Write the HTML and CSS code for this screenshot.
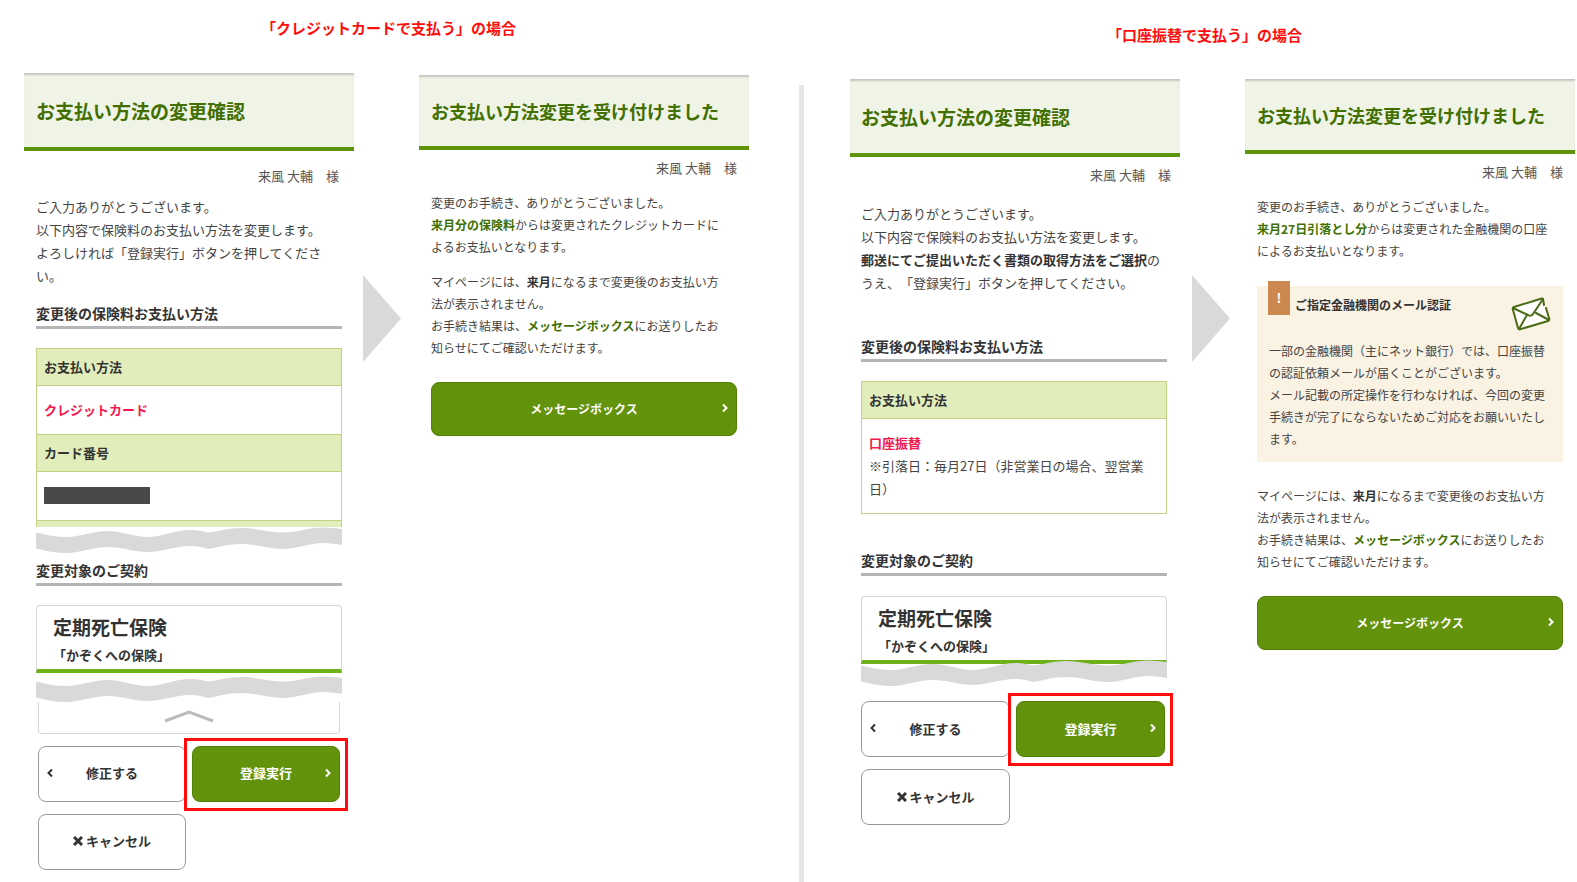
FILE: index.html
```html
<!DOCTYPE html>
<html lang="ja">
<head>
    <meta charset="UTF-8">
    <meta name="viewport" content="width=device-width, initial-scale=1.0">
    <title>お支払い方法の変更</title>
    <link rel="stylesheet" href="styles.css">
</head>
<body>
    <!-- クレジットカード -->
    <section class="case case-card">
        <h1 class="caption">「クレジットカードで支払う」の場合</h1>
        <div class="flow">
            <div class="step step-confirm">
                <h2 class="step-title">お支払い方法の変更確認</h2>
                <p class="customer">来風 大輔　様</p>
                <div class="step-body">
                    <p class="text">ご入力ありがとうございます。<br>以下内容で保険料のお支払い方法を変更します。<br>よろしければ「登録実行」ボタンを押してください。</p>
                    <h3 class="section-title">変更後の保険料お支払い方法</h3>
                    <table class="info">
                        <tr><th scope="row">お支払い方法</th></tr>
                        <tr><td><strong class="value">クレジットカード</strong></td></tr>
                        <tr><th scope="row">カード番号</th></tr>
                        <tr><td><span class="masked"></span></td></tr>
                        <tr><th class="cut"></th></tr>
                    </table>
                    <svg class="wave" viewBox="0 0 306 26" preserveAspectRatio="none" aria-hidden="true">
                        <path d="M0 5.500C10 8 20 10 30 10C45 10 56 4 72 4C86 4 98 10 111 10C127 10 138 3 155 3C162 3 166 4 172 5.500C184 4 192 1 205 1C220 1 232 5.500 247 5.500C262 5.500 272 .5 288 .5C294 .5 300 1 306 2V18C300 17 294 16 288 16C272 16 262 22 247 22C232 22 220 17 205 17C192 17 184 20 172 22C166 20 162 19 155 19C138 19 127 25 111 25C98 25 86 20 72 20C56 20 45 26 30 26C20 26 10 24 0 21.500Z"/>
                    </svg>
                    <h3 class="section-title">変更対象のご契約</h3>
                    <div class="contract">
                        <p class="contract-name">定期死亡保険</p>
                        <p class="contract-sub">「かぞくへの保険」</p>
                    </div>
                    <svg class="wave" viewBox="0 0 306 26" preserveAspectRatio="none" aria-hidden="true">
                        <path d="M0 5.500C10 8 20 10 30 10C45 10 56 4 72 4C86 4 98 10 111 10C127 10 138 3 155 3C162 3 166 4 172 5.500C184 4 192 1 205 1C220 1 232 5.500 247 5.500C262 5.500 272 .5 288 .5C294 .5 300 1 306 2V18C300 17 294 16 288 16C272 16 262 22 247 22C232 22 220 17 205 17C192 17 184 20 172 22C166 20 162 19 155 19C138 19 127 25 111 25C98 25 86 20 72 20C56 20 45 26 30 26C20 26 10 24 0 21.500Z"/>
                    </svg>
                    <div class="contract-end">
                        <svg width="50" height="14" viewBox="0 0 50 14" aria-hidden="true"><path d="M1 12L25 3L49 12" fill="none" stroke="#bbb" stroke-width="3"/></svg>
                    </div>
                    <div class="buttons">
                        <button type="button" class="btn">
                            <svg class="icon" viewBox="0 0 10 10" aria-hidden="true"><path d="M6 1.500L2.500 5L6 8.500"/></svg>
                            <span>修正する</span>
                        </button>
                        <div class="highlight">
                            <button type="button" class="btn btn-green">
                                <span>登録実行</span>
                                <svg class="icon" viewBox="0 0 10 10" aria-hidden="true"><path d="M4 1.500L7.500 5L4 8.500"/></svg>
                            </button>
                        </div>
                        <button type="button" class="btn">
                            <span><svg class="icon icon-close" viewBox="0 0 10 10" aria-hidden="true"><path d="M1 1L9 9M9 1L1 9"/></svg> キャンセル</span>
                        </button>
                    </div>
                </div>
            </div>

            <div class="arrow">
                <svg width="38" height="87" viewBox="0 0 38 87" aria-hidden="true"><path d="M0 0L38 43.500L0 87Z" fill="#d9d9d9"/></svg>
            </div>

            <div class="step step-done">
                <h2 class="step-title">お支払い方法変更を受け付けました</h2>
                <p class="customer">来風 大輔　様</p>
                <div class="step-body">
                    <p class="text">変更のお手続き、ありがとうございました。<br><strong class="green">来月分の保険料</strong>からは変更されたクレジットカードによるお支払いとなります。</p>
                    <p class="text">マイページには、<strong>来月</strong>になるまで変更後のお支払い方法が表示されません。<br>お手続き結果は、<strong class="green">メッセージボックス</strong>にお送りしたお知らせにてご確認いただけます。</p>
                    <button type="button" class="btn btn-green btn-message">
                        <span>メッセージボックス</span>
                        <svg class="icon" viewBox="0 0 10 10" aria-hidden="true"><path d="M4 1.500L7.500 5L4 8.500"/></svg>
                    </button>
                </div>
            </div>
        </div>
    </section>

    <div class="divider"></div>

    <!-- 口座振替 -->
    <section class="case case-bank">
        <h1 class="caption">「口座振替で支払う」の場合</h1>
        <div class="flow">
            <div class="step step-confirm">
                <h2 class="step-title">お支払い方法の変更確認</h2>
                <p class="customer">来風 大輔　様</p>
                <div class="step-body">
                    <p class="text">ご入力ありがとうございます。<br>以下内容で保険料のお支払い方法を変更します。<br><strong>郵送にてご提出いただく書類の取得方法をご選択</strong>のうえ、「登録実行」ボタンを押してください。</p>
                    <h3 class="section-title">変更後の保険料お支払い方法</h3>
                    <table class="info">
                        <tr><th scope="row">お支払い方法</th></tr>
                        <tr><td><strong class="value">口座振替</strong><br>※引落日：毎月27日（非営業日の場合、翌営業日）</td></tr>
                    </table>
                    <h3 class="section-title">変更対象のご契約</h3>
                    <div class="contract">
                        <p class="contract-name">定期死亡保険</p>
                        <p class="contract-sub">「かぞくへの保険」</p>
                    </div>
                    <svg class="wave" viewBox="0 0 306 26" preserveAspectRatio="none" aria-hidden="true">
                        <path d="M0 5.500C10 8 20 10 30 10C45 10 56 4 72 4C86 4 98 10 111 10C127 10 138 3 155 3C162 3 166 4 172 5.500C184 4 192 1 205 1C220 1 232 5.500 247 5.500C262 5.500 272 .5 288 .5C294 .5 300 1 306 2V18C300 17 294 16 288 16C272 16 262 22 247 22C232 22 220 17 205 17C192 17 184 20 172 22C166 20 162 19 155 19C138 19 127 25 111 25C98 25 86 20 72 20C56 20 45 26 30 26C20 26 10 24 0 21.500Z"/>
                    </svg>
                    <div class="buttons">
                        <button type="button" class="btn">
                            <svg class="icon" viewBox="0 0 10 10" aria-hidden="true"><path d="M6 1.500L2.500 5L6 8.500"/></svg>
                            <span>修正する</span>
                        </button>
                        <div class="highlight">
                            <button type="button" class="btn btn-green">
                                <span>登録実行</span>
                                <svg class="icon" viewBox="0 0 10 10" aria-hidden="true"><path d="M4 1.500L7.500 5L4 8.500"/></svg>
                            </button>
                        </div>
                        <button type="button" class="btn">
                            <span><svg class="icon icon-close" viewBox="0 0 10 10" aria-hidden="true"><path d="M1 1L9 9M9 1L1 9"/></svg> キャンセル</span>
                        </button>
                    </div>
                </div>
            </div>

            <div class="arrow">
                <svg width="38" height="87" viewBox="0 0 38 87" aria-hidden="true"><path d="M0 0L38 43.500L0 87Z" fill="#d9d9d9"/></svg>
            </div>

            <div class="step step-done">
                <h2 class="step-title">お支払い方法変更を受け付けました</h2>
                <p class="customer">来風 大輔　様</p>
                <div class="step-body">
                    <p class="text">変更のお手続き、ありがとうございました。<br><strong class="green">来月27日引落とし分</strong>からは変更された金融機関の口座によるお支払いとなります。</p>
                    <div class="notice">
                        <span class="notice-mark">!</span>
                        <div class="notice-head">
                            <h3 class="notice-title">ご指定金融機関のメール認証</h3>
                            <svg width="40" height="36" viewBox="0 0 40 36" fill="none" stroke="#4a6b14" stroke-width="2" stroke-linejoin="round" stroke-linecap="round" aria-hidden="true">
                                <path d="M2 11L32 2L38 23L9 32Z" fill="white" stroke="none"/>
                                <path d="M33 8L32 2Q31 1 29 2L3 10Q1 11 2 13L7 31Q8 33 10 32L37 24Q39 23 38 21L35 11"/>
                                <path d="M2 11L17 18Q20 20 22 17L32 2M8 32L16 18M38 23L25 16"/>
                            </svg>
                        </div>
                        <p class="notice-text">一部の金融機関（主にネット銀行）では、口座振替の認証依頼メールが届くことがございます。<br>メール記載の所定操作を行わなければ、今回の変更手続きが完了にならないためご対応をお願いいたします。</p>
                    </div>
                    <p class="text">マイページには、<strong>来月</strong>になるまで変更後のお支払い方法が表示されません。<br>お手続き結果は、<strong class="green">メッセージボックス</strong>にお送りしたお知らせにてご確認いただけます。</p>
                    <button type="button" class="btn btn-green btn-message">
                        <span>メッセージボックス</span>
                        <svg class="icon" viewBox="0 0 10 10" aria-hidden="true"><path d="M4 1.500L7.500 5L4 8.500"/></svg>
                    </button>
                </div>
            </div>
        </div>
    </section>
</body>
</html>
```
FILE: styles.css
```css
* {
    box-sizing: border-box;
    margin: 0;
    padding: 0;
}

body {
    display: flex;
    min-height: 100vh;
    background-color: white;
    color: #444;
    font-family: "Noto Sans CJK JP", sans-serif;
    font-size: 13px;
    line-height: 20px;
    text-spacing-trim: space-all;
}

strong {
    color: #333;
}

.case {
    flex: 1 1 0;
}

.case-card {
    padding: 18px 50px 0 24px;
}

.case-bank {
    padding: 25px 2px 0 46px;
}

.divider {
    width: 5px;
    margin-top: 85px;
    background-color: #e6e6e6;
}

.caption {
    color: #ff0d0d;
    font-size: 15px;
    line-height: 20px;
    text-align: center;
}

.case-card .caption {
    padding-left: 4px;
}

.case-bank .caption {
    padding-right: 16px;
}

.flow {
    display: flex;
    align-items: flex-start;
    margin-top: 35px;
}

.step {
    flex: 1 1 0;
}

.case-card .step-done {
    margin-top: 2px;
}

.case-bank .flow {
    margin-top: 34px;
}

.arrow {
    flex: 0 0 65px;
    padding: 202px 0 0 9px;
}

.case-bank .arrow {
    padding: 196px 0 0 12px;
}

.arrow svg {
    display: block;
}

.step-title {
    padding: 26px 12px 24px;
    background-color: #f0f4e6;
    border-bottom: 4px solid #5f930a;
    box-shadow: inset 0 3px 2px -1px #c4c6c0;
    color: #416f00;
    font-size: 19px;
    line-height: 24px;
}

.step-done .step-title {
    padding: 24px 12px 23px;
    font-size: 18px;
}

.case-bank .step-confirm .step-title {
    padding-left: 11px;
}

.customer {
    margin-top: 8px;
    padding-right: 12px;
    color: #555;
    text-align: right;
}

.case-card .step-confirm .customer {
    margin-top: 15px;
    padding-right: 15px;
}

.case-bank .step-confirm .customer {
    padding-right: 9px;
}

.step-body {
    padding: 9px 12px 0;
}

.case-bank .step-confirm .step-body {
    padding: 17px 13px 0 11px;
}

.step-done .step-body {
    padding-top: 14px;
}

.text {
    line-height: 23px;
}

.step-done .text {
    margin-bottom: 13px;
    padding-right: 12px;
    font-size: 12px;
    line-height: 22px;
}

.green {
    color: #3f7000;
}

.section-title {
    margin-top: 16px;
    padding-bottom: 3px;
    border-bottom: 3px solid #b5b5b5;
    color: #333;
    font-size: 14px;
    line-height: 20px;
}

.case-bank .text + .section-title {
    margin-top: 42px;
}

.wave + .section-title {
    margin-top: 7px;
}

.info + .section-title {
    margin-top: 36px;
}

.info {
    width: 100%;
    margin-top: 19px;
    border-collapse: collapse;
}

.info th,
.info td {
    border: 1px solid #c3d186;
    text-align: left;
}

.info th {
    padding: 8px 7px;
    background-color: #e1eebc;
    color: #333;
}

.info td {
    padding: 12px 7px 13px;
    line-height: 23px;
}

.info .cut {
    height: 6px;
    padding: 0;
    border-bottom: none;
}

.value {
    color: #f5174f;
}

.masked {
    display: block;
    width: 106px;
    height: 17px;
    margin: 3px 0;
    background-color: #4a4849;
}

.wave {
    display: block;
    position: relative;
    width: 100%;
    height: 26px;
    fill: #d9d9d9;
}

.contract {
    margin-top: 19px;
    padding: 9px 16px 4px;
    border: 1px solid #d5d5d5;
    border-bottom: 4px solid #6eb018;
    border-radius: 4px 4px 0 0;
    color: #333;
    font-weight: bold;
}

.contract-name {
    font-size: 19px;
    line-height: 24px;
}

.contract-sub {
    margin-top: 6px;
}

.case-card .contract + .wave {
    margin-top: 3px;
}

.case-bank .contract {
    margin-top: 20px;
}

.case-bank .contract + .wave {
    margin-top: -4px;
}

.contract-end {
    height: 32px;
    margin: 0 2px;
    padding-top: 7px;
    border: 1px solid #d5d5d5;
    border-top: none;
    border-radius: 0 0 4px 4px;
    line-height: 14px;
    text-align: center;
}

.buttons {
    display: grid;
    grid-template-columns: 1fr 1fr;
    gap: 12px 6px;
    margin: 12px 2px 0;
}

.case-bank .buttons {
    margin: 15px 2px 0 0;
}

.btn {
    display: grid;
    grid-template-columns: 10px 1fr 10px;
    align-items: center;
    width: 100%;
    height: 56px;
    padding: 0 7px 2px;
    background-color: white;
    border: 1px solid #999;
    border-radius: 8px;
    color: #333;
    font-family: inherit;
    font-size: 13px;
    font-weight: bold;
    cursor: pointer;
}

.btn span {
    grid-column: 2;
}

.btn-green {
    background-color: #63920d;
    border-color: #558007;
    color: white;
}

.btn-message {
    height: 54px;
    margin-top: 23px;
    font-size: 12px;
}

.icon {
    width: 10px;
    height: 10px;
    fill: none;
    stroke: currentColor;
    stroke-width: 2;
}

.icon-close {
    stroke-width: 3;
}

/* 赤枠 */
.highlight {
    position: relative;
}

.highlight::after {
    content: "";
    position: absolute;
    inset: -8px -8px -9px;
    border: 3px solid #ff0d0d;
    pointer-events: none;
}

.notice {
    position: relative;
    margin: 24px 0 23px;
    padding: 9px 12px 12px;
    background-color: #faf2e3;
}

.notice-mark {
    position: absolute;
    top: -5px;
    left: 11px;
    width: 22px;
    height: 34px;
    background-color: #cd884f;
    color: white;
    font-weight: bold;
    line-height: 34px;
    text-align: center;
}

.notice-head {
    display: flex;
    justify-content: space-between;
    padding-left: 26px;
}

.notice-head svg {
    margin-top: 2px;
}

.notice-title {
    color: #333;
    font-size: 12px;
    line-height: 20px;
}

.notice-text {
    margin-top: 7px;
    font-size: 12px;
    line-height: 22px;
}
```
